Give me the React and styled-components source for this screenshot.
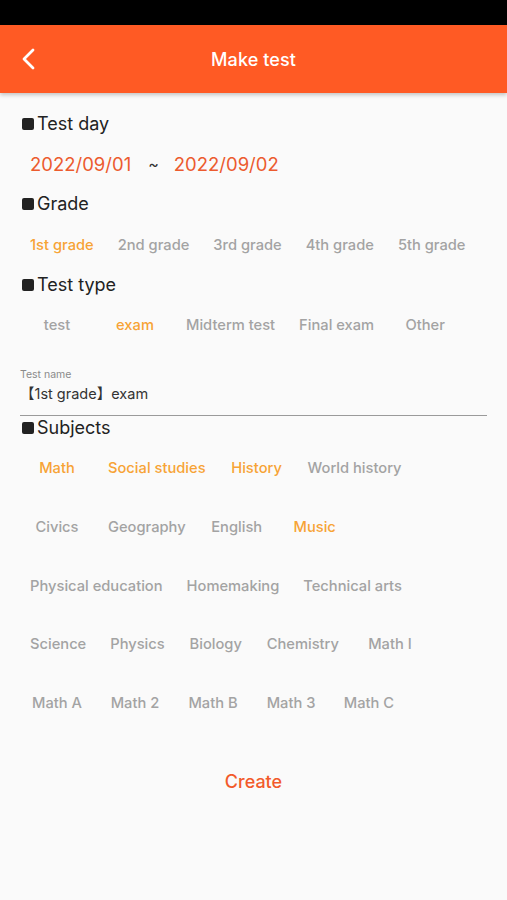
import React from "react";
import styled, { createGlobalStyle } from "styled-components";

const Global = createGlobalStyle`
  html, body { margin: 0; padding: 0; background: #fafafa; }
  body { font-family: Inter, "Noto Sans", "Noto Sans CJK JP", sans-serif; }
  * { box-sizing: border-box; }
`;

const Screen = styled.div`
  width: 507px;
  height: 900px;
  background: #fafafa;
  display: flex;
  flex-direction: column;
  overflow: hidden;
`;

const StatusBar = styled.div`
  height: 25px;
  background: #000;
  flex: none;
`;

const Header = styled.header`
  height: 68px;
  flex: none;
  background: #ff5a24;
  display: flex;
  align-items: center;
  justify-content: center;
  position: relative;
  box-shadow: 0 2px 4px rgba(0, 0, 0, 0.22);
  z-index: 1;
`;

const BackButton = styled.button`
  position: absolute;
  left: 14px;
  top: 50%;
  transform: translateY(-50%);
  width: 28px;
  height: 28px;
  border: none;
  background: none;
  padding: 0;
  display: flex;
  align-items: center;
  justify-content: center;
`;

const Title = styled.h1`
  margin: 0;
  color: #fff;
  font-size: 18px;
  font-weight: 500;
  letter-spacing: 0.1px;
`;

const Body = styled.main`
  flex: 1;
  display: flex;
  flex-direction: column;
  padding: 19px 20px 0 22px;
`;

const Heading = styled.h2`
  margin: ${(p) => p.$mt || 0}px 0 0;
  height: 24px;
  line-height: 24px;
  font-size: 18px;
  font-weight: 400;
  color: #222;
  display: flex;
  align-items: center;
`;

const Square = styled.span`
  width: 12px;
  height: 12px;
  border-radius: 2px;
  background: #222;
  margin-right: 3px;
`;

const DateRow = styled.div`
  margin-top: 8px;
  height: 40px;
  display: flex;
  align-items: center;
  padding-left: 8px;
`;

const DateText = styled.span`
  color: #ec5b2e;
  font-size: 18.5px;
  font-weight: 400;
`;

const Tilde = styled.span`
  color: #333;
  font-size: 16px;
  margin: 0 15px 0 17px;
`;

const ChipRow = styled.div`
  margin-top: ${(p) => p.$mt || 0}px;
  display: flex;
  flex-wrap: wrap;
  column-gap: 8px;
  row-gap: 10.75px;
`;

const Chip = styled.button`
  height: ${(p) => p.$h || 40}px;
  min-width: 70px;
  padding: 0 8px;
  border: none;
  background: none;
  font-family: inherit;
  font-size: 14.7px;
  font-weight: 500;
  color: ${(p) => (p.$active ? "#f7a335" : "#a3a3a3")};
  display: flex;
  align-items: center;
  justify-content: center;
  white-space: nowrap;
`;

const Field = styled.div`
  margin-top: 23px;
  margin-left: -2px;
  border-bottom: 1px solid #9a9a9a;
  padding-bottom: 12px;
  display: flex;
  flex-direction: column;
`;

const FieldLabel = styled.label`
  font-size: 10.5px;
  color: #8a8a8a;
  line-height: 13px;
`;

const FieldValue = styled.div`
  margin-top: 4px;
  font-size: 14.5px;
  color: #333;
  line-height: 18px;
  font-family: Inter, "Noto Sans CJK JP", sans-serif;
`;

const SubjectGrid = styled.div`
  margin-top: 4px;
  display: flex;
  flex-direction: column;
  row-gap: 10.75px;
`;

const CreateButton = styled.button`
  align-self: center;
  margin-top: 40px;
  margin-left: -2px;
  border: none;
  background: none;
  font-family: inherit;
  font-size: 18px;
  font-weight: 500;
  color: #f25a2b;
  height: 28px;
  padding: 0 8px;
`;

const grades = ["1st grade", "2nd grade", "3rd grade", "4th grade", "5th grade"];
const types = ["test", "exam", "Midterm test", "Final exam", "Other"];
const subjects = [
  ["Math", true],
  ["Social studies", true],
  ["History", true],
  ["World history", false],
  ["Civics", false],
  ["Geography", false],
  ["English", false],
  ["Music", true],
  ["Physical education", false],
  ["Homemaking", false],
  ["Technical arts", false],
  ["Science", false],
  ["Physics", false],
  ["Biology", false],
  ["Chemistry", false],
  ["Math I", false],
  ["Math A", false],
  ["Math 2", false],
  ["Math B", false],
  ["Math 3", false],
  ["Math C", false],
];

const rows = [[0, 4], [4, 8], [8, 11], [11, 16], [16, 21]];

export default function App() {
  return (
    <Screen>
      <Global />
      <StatusBar />
      <Header>
        <BackButton aria-label="back">
          <svg width="16" height="24" viewBox="0 0 16 24" fill="none">
            <path d="M13 3 L4 12 L13 21" stroke="#fff" strokeWidth="2.8" strokeLinecap="round" strokeLinejoin="round" />
          </svg>
        </BackButton>
        <Title>Make test</Title>
      </Header>
      <Body>
        <Heading><Square />Test day</Heading>
        <DateRow>
          <DateText>2022/09/01</DateText>
          <Tilde>~</Tilde>
          <DateText>2022/09/02</DateText>
        </DateRow>
        <Heading $mt={8}><Square />Grade</Heading>
        <ChipRow $mt={9}>
          {grades.map((g, i) => (
            <Chip key={g} $active={i === 0}>{g}</Chip>
          ))}
        </ChipRow>
        <Heading $mt={8}><Square />Test type</Heading>
        <ChipRow $mt={8}>
          {types.map((t) => (
            <Chip key={t} $active={t === "exam"}>{t}</Chip>
          ))}
        </ChipRow>
        <Field>
          <FieldLabel>Test name</FieldLabel>
          <FieldValue>【1st grade】exam</FieldValue>
        </Field>
        <Heading><Square />Subjects</Heading>
        <SubjectGrid>
          {rows.map(([a, b], ri) => (
            <ChipRow key={ri}>
              {subjects.slice(a, b).map(([s, on]) => (
                <Chip key={s} $h={48} $active={on}>{s}</Chip>
              ))}
            </ChipRow>
          ))}
        </SubjectGrid>
        <CreateButton>Create</CreateButton>
      </Body>
    </Screen>
  );
}
